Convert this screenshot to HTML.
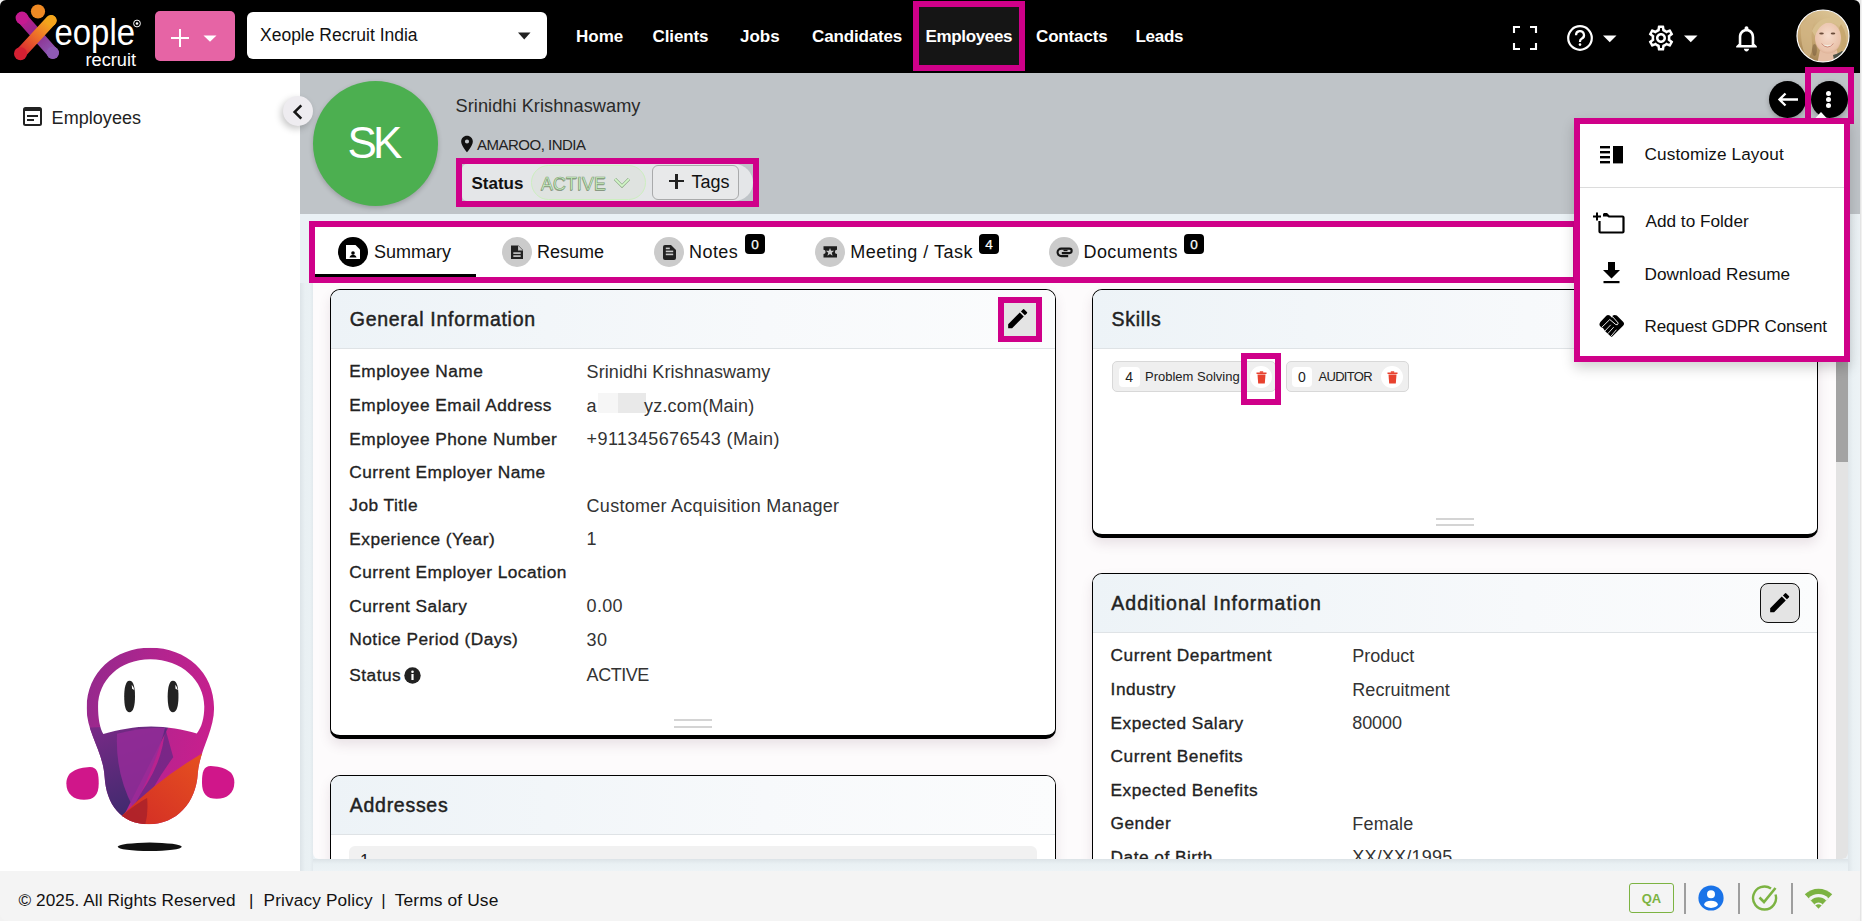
<!DOCTYPE html>
<html><head><meta charset="utf-8">
<style>
*{box-sizing:border-box;margin:0;padding:0}
html,body{width:1862px;height:921px;overflow:hidden;background:#f2f2f2;font-family:"Liberation Sans",sans-serif;color:#222}
.a{position:absolute}
.t{position:absolute;white-space:nowrap;line-height:1}
#hdr{left:0;top:0;width:1860px;height:73px;background:#000;border-radius:6px 6px 0 0}
.nav{position:absolute;top:28px;color:#fff;font-weight:700;font-size:17px;white-space:nowrap;line-height:1}
.mg{position:absolute;border:6px solid #cf0089}
#side{left:0;top:73px;width:300px;height:798px;background:#fff}
#main{left:300px;top:73px;width:1560px;height:798px;background:#eaf1f5}
#prof{left:300px;top:73px;width:1560px;height:141px;background:#bfc4c8}
#panel{left:313px;top:283px;width:1535px;height:576px;background:#fdfbfc;border-radius:0 0 6px 6px;overflow:hidden}
.card{position:absolute;background:#fff;border:1.5px solid #000;border-bottom-width:4px;border-radius:10px;box-shadow:0 6px 12px rgba(100,60,85,.13);overflow:hidden}
.ch{position:absolute;left:0;top:0;right:0;height:59px;background:linear-gradient(90deg,#edf3f7,#f7f9fb 60%,#fbfcfd);border-bottom:1px solid #dfe3e6}
.ct{position:absolute;font-size:19.5px;letter-spacing:.72px;margin-left:.6px;color:#222;white-space:nowrap;line-height:1;-webkit-text-stroke:.45px #222}
.lb{position:absolute;font-size:17.3px;font-weight:400;-webkit-text-stroke:.32px #222;letter-spacing:.48px;margin-top:-.25px;margin-left:.3px;color:#222;white-space:nowrap;line-height:1}
.vl{position:absolute;font-size:18px;color:#333;white-space:nowrap;line-height:1}
#foot{left:0;top:871px;width:1860px;height:50px;background:#f4f4f4;border-radius:0 0 8px 8px}
</style></head><body>

<!-- HEADER -->
<div id="hdr" class="a"></div>
<!-- logo -->
<svg class="a" style="left:0;top:0" width="150" height="72" viewBox="0 0 150 72">
 <defs>
  <linearGradient id="lg1" x1="22" y1="18" x2="53" y2="53" gradientUnits="userSpaceOnUse"><stop offset="0" stop-color="#c51a90"/><stop offset=".45" stop-color="#8d2a8c"/><stop offset="1" stop-color="#8e5ab4"/></linearGradient>
  <linearGradient id="lg2" x1="51" y1="20" x2="20" y2="54" gradientUnits="userSpaceOnUse"><stop offset="0" stop-color="#f6b21a"/><stop offset=".5" stop-color="#ec6a2a"/><stop offset="1" stop-color="#d42032"/></linearGradient>
 </defs>
 <path d="M22 18L53 53" stroke="url(#lg1)" stroke-width="11.5" stroke-linecap="round"/>
 <circle cx="22" cy="18" r="6.4" fill="#c51a90"/>
 <circle cx="52.8" cy="52.8" r="6.2" fill="#8e5ab4"/>
 <path d="M51 20.5L20.5 53.5" stroke="url(#lg2)" stroke-width="11" stroke-linecap="round"/>
 <circle cx="51.5" cy="20.5" r="5.2" fill="#f4a51c"/>
 <circle cx="20.5" cy="53.7" r="6.5" fill="#d42032"/>
 <circle cx="38" cy="11.5" r="7.1" fill="#f08a24"/>
 <text x="54.5" y="45.2" fill="#fff" font-family="Liberation Sans" font-size="37.5" textLength="80.5" lengthAdjust="spacingAndGlyphs">eople</text>
 <text x="85.5" y="65.6" fill="#fff" font-family="Liberation Sans" font-size="18" textLength="50.5" lengthAdjust="spacingAndGlyphs">recruit</text>
 <circle cx="137" cy="23.5" r="3.4" fill="none" stroke="#fff" stroke-width="1"/>
 <circle cx="137" cy="23.5" r="1.3" fill="#fff"/>
</svg>
<!-- pink add btn -->
<div class="a" style="left:155px;top:11px;width:80px;height:50px;background:#e664a5;border-radius:5px"></div>
<div class="a" style="left:171px;top:36.8px;width:18px;height:2.5px;background:#fff"></div>
<div class="a" style="left:178.7px;top:29.2px;width:2.6px;height:17.6px;background:#fff"></div>
<svg class="a" style="left:203px;top:35px" width="14" height="7"><path d="M0.5 0.5H13.5L7 6.8Z" fill="#fff"/></svg>
<!-- tenant dropdown -->
<div class="a" style="left:247px;top:12px;width:300px;height:47px;background:#fff;border-radius:6px"></div>
<div class="t" style="left:260px;top:26.5px;font-size:17.5px;color:#111">Xeople Recruit India</div>
<svg class="a" style="left:518px;top:32px" width="13" height="8"><path d="M0 0.5H12.5L6.25 7.5Z" fill="#222"/></svg>
<!-- nav -->
<div class="mg" style="left:913px;top:1px;width:112px;height:70px;background:#151515"></div>
<div class="nav" style="left:576px">Home</div>
<div class="nav" style="left:652.5px;letter-spacing:-.1px">Clients</div>
<div class="nav" style="left:740px">Jobs</div>
<div class="nav" style="left:812px;letter-spacing:-.15px">Candidates</div>
<div class="nav" style="left:925.5px;letter-spacing:-.35px">Employees</div>
<div class="nav" style="left:1036px;letter-spacing:-.15px">Contacts</div>
<div class="nav" style="left:1135.5px;letter-spacing:-.3px">Leads</div>
<!-- right icons -->
<svg class="a" style="left:1512px;top:25px" width="26" height="26" viewBox="0 0 26 26" fill="none" stroke="#fff" stroke-width="2.1">
 <path d="M2 8V2H8M18 2H24V8M24 18V24H18M8 24H2V18"/>
</svg>
<svg class="a" style="left:1566px;top:24px" width="28" height="28" viewBox="0 0 28 28" fill="none" stroke="#fff" stroke-width="2.2">
 <circle cx="14" cy="14" r="11.8"/>
 <path d="M10 11.2a4 4 0 1 1 5.6 3.6c-1.1.6-1.6 1.2-1.6 2.6v.6" stroke-linecap="butt"/>
 <circle cx="14" cy="20.6" r="1.3" fill="#fff" stroke="none"/>
</svg>
<svg class="a" style="left:1603px;top:35px" width="14" height="8"><path d="M0 0.5H13.5L6.75 7.3Z" fill="#fff"/></svg>
<svg class="a" style="left:1646px;top:23px" width="30" height="30" viewBox="0 0 24 24"><path fill="#fff" d="M19.43 12.98c.04-.32.07-.64.07-.98 0-.34-.03-.66-.07-.98l2.11-1.650c.19-.15.24-.42.12-.64l-2-3.46a.5.5 0 0 0-.44-.25c-.06 0-.12.01-.17.03l-2.49 1c-.52-.4-1.080-.73-1.69-.98l-.38-2.65A.488.488 0 0 0 14 2h-4c-.25 0-.46.18-.49.42l-.38 2.65c-.61.25-1.170.59-1.69.98l-2.49-1a.566.566 0 0 0-.18-.03c-.17 0-.34.09-.43.25l-2 3.46c-.13.22-.07.49.12.64l2.11 1.65c-.04.32-.07.65-.07.98s.03.66.07.98l-2.11 1.65c-.19.15-.24.42-.12.64l2 3.46a.5.5 0 0 0 .44.25c.06 0 .12-.01.17-.03l2.49-1c.52.4 1.08.73 1.69.98l.38 2.65c.03.24.24.42.49.42h4c.25 0 .46-.18.49-.42l.38-2.65c.61-.25 1.17-.59 1.69-.98l2.49 1c.06.02.12.03.18.03.17 0 .34-.09.43-.25l2-3.46c.12-.22.07-.49-.12-.64l-2.11-1.65zm-1.98-1.71c.04.31.05.52.05.73 0 .21-.02.43-.05.73l-.14 1.13.89.7 1.08.84-.7 1.21-1.27-.51-1.04-.42-.9.68c-.43.32-.84.56-1.250.73l-1.06.43-.16 1.13-.2 1.35h-1.4l-.19-1.35-.16-1.13-1.06-.43c-.43-.18-.83-.41-1.23-.71l-.91-.7-1.06.43-1.27.51-.7-1.21 1.08-.84.89-.7-.14-1.13c-.03-.31-.05-.54-.05-.74s.02-.43.05-.73l.14-1.13-.89-.7-1.08-.84.7-1.21 1.27.51 1.04.42.9-.68c.43-.32.84-.56 1.25-.73l1.06-.43.16-1.13.2-1.35h1.39l.19 1.35.16 1.13 1.06.43c.43.18.83.41 1.23.71l.91.7 1.06-.43 1.27-.51.7 1.21-1.07.85-.89.7.14 1.13zM12 8c-2.21 0-4 1.79-4 4s1.79 4 4 4 4-1.79 4-4-1.79-4-4-4zm0 6c-1.1 0-2-.9-2-2s.9-2 2-2 2 .9 2 2-.9 2-2 2z"/></svg>
<svg class="a" style="left:1684px;top:35px" width="14" height="8"><path d="M0 0.5H13.5L6.75 7.3Z" fill="#fff"/></svg>
<svg class="a" style="left:1730.6px;top:22.7px" width="31" height="31" viewBox="0 0 24 24"><path fill="#fff" d="M12 22c1.1 0 2-.9 2-2h-4c0 1.1.89 2 2 2zm6-6v-5c0-3.07-1.64-5.64-4.5-6.32V4c0-.83-.67-1.5-1.5-1.5s-1.5.67-1.5 1.5v.68C7.63 5.36 6 7.92 6 11v5l-2 2v1h16v-1l-2-2zm-2 1H8v-6c0-2.48 1.51-4.5 4-4.5s4 2.02 4 4.5v6z"/></svg>
<!-- avatar photo -->
<svg class="a" style="left:1796px;top:9px" width="54" height="54" viewBox="0 0 54 54">
 <defs>
  <clipPath id="avc"><circle cx="27" cy="27" r="26"/></clipPath>
  <linearGradient id="hairg" x1=".7" y1="0" x2=".2" y2="1"><stop offset="0" stop-color="#dcc597"/><stop offset=".6" stop-color="#c7a772"/><stop offset="1" stop-color="#9c7b4c"/></linearGradient>
  <radialGradient id="faceg" cx=".5" cy=".42" r=".62"><stop offset="0" stop-color="#f6dccd"/><stop offset=".8" stop-color="#eac3ab"/><stop offset="1" stop-color="#d9ab90"/></radialGradient>
 </defs>
 <g clip-path="url(#avc)">
  <rect width="54" height="54" fill="url(#hairg)"/>
  <ellipse cx="18.5" cy="41" rx="2.4" ry="6" fill="#5a4028" opacity=".35"/>
  <path d="M21 56L24 41Q32 47 41 41L43 56Z" fill="#e6bfa6"/>
  <path d="M37 46Q45 44 52 37L56 56L39 56Z" fill="#4b5046"/>
  <ellipse cx="32" cy="29" rx="13" ry="15.5" fill="url(#faceg)"/>
  <path d="M16 22Q23 7 38 9Q47 11 48 22Q42 14 34 13.5Q24 13.5 19 27Z" fill="#d8bf8e"/>
  <path d="M45 15Q53 26 49 44L44.5 41Q47 29 43 19Z" fill="#c8a870"/>
  <path d="M5 16Q12 8 20 10Q14 20 16 34Q17 44 12 50Q4 40 5 16Z" fill="#d2b584" opacity=".8"/>
  <ellipse cx="25.5" cy="24.5" rx="2.3" ry="1" fill="#6a4c3a"/>
  <ellipse cx="37" cy="24.5" rx="2.3" ry="1" fill="#6a4c3a"/>
  <path d="M26 35Q31.5 40.5 37 35Q31.5 37 26 35Z" fill="#f2ede2"/>
  <path d="M25.5 34.6Q31.5 41.5 37.5 34.6" stroke="#c47e6c" stroke-width=".8" fill="none"/>
 </g>
 <circle cx="27" cy="27" r="26" fill="none" stroke="#fff" stroke-width="1.2"/>
</svg>

<!-- SIDEBAR & MAIN -->
<div id="side" class="a"></div>
<div id="main" class="a"></div>
<div id="prof" class="a"></div>
<div id="panel" class="a"></div>

<!-- sidebar content -->
<svg class="a" style="left:23px;top:107px" width="19" height="19" viewBox="0 0 19 19">
 <rect x="1" y="1" width="17" height="17" rx="1.5" fill="none" stroke="#222" stroke-width="2"/>
 <rect x="1" y="1" width="17" height="3" fill="#222"/>
 <rect x="4" y="8" width="11" height="2" fill="#222"/>
 <rect x="4" y="12" width="7" height="2" fill="#222"/>
</svg>
<div class="t" style="left:51.6px;top:109.4px;font-size:18px;color:#222;letter-spacing:.05px">Employees</div>
<div class="a" style="left:283px;top:96px;width:30px;height:30px;border-radius:50%;background:#eeecf0;box-shadow:-2px 3px 7px rgba(0,0,0,.22)"></div>
<svg class="a" style="left:291px;top:103px" width="14" height="18" viewBox="0 0 14 18"><path d="M10.3 2.3L3.6 9l6.7 6.7" fill="none" stroke="#161616" stroke-width="2.5"/></svg>

<!-- profile header -->
<div class="a" style="left:313px;top:81px;width:125px;height:125px;border-radius:50%;background:#4caf50;box-shadow:0 2px 5px rgba(0,0,0,.2)"></div>
<div class="t" style="left:347.5px;top:121px;font-size:44px;color:#fff;letter-spacing:-3.8px">SK</div>
<div class="t" style="left:455.5px;top:97px;font-size:18.2px;color:#2a2a2a;letter-spacing:.05px">Srinidhi Krishnaswamy</div>
<svg class="a" style="left:456.8px;top:133.6px" width="20" height="20" viewBox="0 0 24 24"><path fill="#111" d="M12 2C8.13 2 5 5.13 5 9c0 5.25 7 13 7 13s7-7.75 7-13c0-3.87-3.13-7-7-7zm0 9.5a2.5 2.5 0 1 1 0-5 2.5 2.5 0 0 1 0 5z"/></svg>
<div class="t" style="left:477px;top:137px;font-size:15px;color:#222;letter-spacing:-.5px">AMAROO, INDIA</div>
<!-- status bar -->
<div class="mg" style="left:456px;top:158px;width:303px;height:49px"></div>
<div class="a" style="left:462px;top:164px;width:291px;height:37px;background:#e4e6e8;border-radius:6px 22px 22px 6px;overflow:hidden"></div>
<div class="t" style="left:471.5px;top:175px;font-size:17px;font-weight:700;color:#111">Status</div>
<div class="a" style="left:531px;top:165px;width:115px;height:35px;border:1px solid #cdeec0;border-radius:18px;background:#dfe3e0"></div>
<div class="t" style="left:541px;top:174.5px;font-size:18px;color:#d2f6c8;-webkit-text-stroke:.6px #7d9a74;text-shadow:-.5px .5px 0 rgba(60,80,55,.5)">ACTIVE</div>
<svg class="a" style="left:613px;top:177px" width="18" height="11" viewBox="0 0 18 11"><path d="M2 2l7 7 7-7" fill="none" stroke="#7d9a74" stroke-width="3"/><path d="M2 2l7 7 7-7" fill="none" stroke="#d2f6c8" stroke-width="1.8"/></svg>
<div class="a" style="left:652px;top:164.5px;width:87px;height:35px;border:1px solid #a9aaab;border-radius:6px;background:#e8e9ea"></div>
<div class="a" style="left:669px;top:180px;width:15px;height:2.2px;background:#222"></div>
<div class="a" style="left:675.4px;top:173.6px;width:2.2px;height:15px;background:#222"></div>
<div class="t" style="left:691.5px;top:173px;font-size:18px;color:#111">Tags</div>

<!-- back & kebab -->
<div class="a" style="left:1769px;top:81px;width:37px;height:37px;border-radius:50%;background:#000;box-shadow:0 2px 5px rgba(0,0,0,.25)"></div>
<svg class="a" style="left:1777px;top:92px" width="22" height="15" viewBox="0 0 22 15"><path d="M21 7.5H3M8.5 1.5L2.5 7.5l6 6" fill="none" stroke="#fff" stroke-width="2.3"/></svg>
<div class="a" style="left:1811px;top:81px;width:37px;height:37px;border-radius:50%;background:#000;box-shadow:0 2px 5px rgba(0,0,0,.25)"></div>
<div class="a" style="left:1826.4px;top:90.8px;width:5px;height:5px;border-radius:50%;background:#fff"></div>
<div class="a" style="left:1826.4px;top:97px;width:5px;height:5px;border-radius:50%;background:#fff"></div>
<div class="a" style="left:1826.4px;top:103.2px;width:5px;height:5px;border-radius:50%;background:#fff"></div>
<svg class="a" style="left:1814px;top:112px" width="14" height="7"><path d="M7 0L13 6.5H1Z" fill="#fff"/></svg>
<div class="mg" style="left:1805px;top:67px;width:49px;height:57px"></div>

<!-- tabs -->
<div class="a" style="left:309px;top:221px;width:1270px;height:62px;background:#fff;border:6px solid #cf0089"></div>
<div class="a" style="left:315px;top:274px;width:161px;height:3px;background:#000"></div>
<div class="a" style="left:338px;top:237px;width:30px;height:30px;border-radius:50%;background:#000"></div>
<svg class="a" style="left:345px;top:244px" width="16" height="16" viewBox="0 0 16 16"><path d="M1 1h9.5L15 5.5V15H1z" fill="#fff"/><circle cx="8" cy="9" r="1.8" fill="#000"/><path d="M4.5 13.6c.4-2 1.8-2.8 3.5-2.8s3.1.8 3.5 2.8z" fill="#000"/></svg>
<div class="t" style="left:374px;top:243px;font-size:18px;color:#111">Summary</div>
<div class="a" style="left:502px;top:237px;width:30px;height:30px;border-radius:50%;background:#cbcbcb"></div>
<svg class="a" style="left:510px;top:244px" width="14" height="16" viewBox="0 0 14 16"><path d="M1 1.5h7.5L13 6v9H1z" fill="#222"/><path d="M8 1.5V6.5h5" fill="#cbcbcb"/><path d="M8.5 1.6V6h4.4" fill="none" stroke="#222" stroke-width=".1"/><rect x="3.3" y="8.3" width="7.4" height="1.6" fill="#cbcbcb"/><rect x="3.3" y="11.3" width="7.4" height="1.6" fill="#cbcbcb"/></svg>
<div class="t" style="left:537px;top:243px;font-size:18px;color:#111">Resume</div>
<div class="a" style="left:654px;top:237px;width:30px;height:30px;border-radius:50%;background:#cbcbcb"></div>
<svg class="a" style="left:662px;top:244px" width="15" height="16" viewBox="0 0 15 16"><path d="M1 3a2 2 0 0 1 2-2h6l5 5v8a2 2 0 0 1-2 2H3a2 2 0 0 1-2-2z" fill="#222"/><rect x="3.8" y="6.6" width="7.4" height="1.6" fill="#cbcbcb"/><rect x="3.8" y="9.6" width="7.4" height="1.6" fill="#cbcbcb"/><rect x="3.8" y="3.6" width="4" height="1.6" fill="#cbcbcb"/></svg>
<div class="t" style="left:689px;top:243px;font-size:18px;color:#111;letter-spacing:.45px">Notes</div>
<div class="a" style="left:745px;top:234px;width:20px;height:19.5px;border-radius:4px;background:#000"></div>
<div class="t" style="left:745px;top:238px;width:20px;text-align:center;font-size:13.5px;font-weight:400;-webkit-text-stroke:.25px #fff;color:#fff">0</div>
<div class="a" style="left:815px;top:237px;width:30px;height:30px;border-radius:50%;background:#cbcbcb"></div>
<svg class="a" style="left:821px;top:244px" width="18" height="16" viewBox="0 0 18 16"><path d="M2.5 2.2h13.5v3.6a2.1 2.1 0 0 0 0 4.2v3.6H2.5V10a2.1 2.1 0 0 0 0-4.2z" fill="#1e1e1e"/><path d="M9.00 3.90L10.12 6.66L13.09 6.87L10.81 8.79L11.53 11.68L9.00 10.10L6.47 11.68L7.19 8.79L4.91 6.87L7.88 6.66Z" fill="#cbcbcb"/></svg>
<div class="t" style="left:850.3px;top:243px;font-size:18px;color:#111;letter-spacing:.5px">Meeting / Task</div>
<div class="a" style="left:979px;top:234px;width:20px;height:19.5px;border-radius:4px;background:#000"></div>
<div class="t" style="left:979px;top:238px;width:20px;text-align:center;font-size:13.5px;font-weight:400;-webkit-text-stroke:.25px #fff;color:#fff">4</div>
<div class="a" style="left:1049px;top:237px;width:30px;height:30px;border-radius:50%;background:#cbcbcb"></div>
<svg class="a" style="left:1055px;top:245px" width="18" height="14" viewBox="0 0 18 14"><path d="M13.2 11.1H6.3A3.75 3.75 0 0 1 6.3 3.6H14.4A2.25 2.25 0 0 1 14.4 8.1H6.8" fill="none" stroke="#151515" stroke-width="2.1"/><path d="M8.5 5.5H12.5" stroke="#151515" stroke-width="1.4"/></svg>
<div class="t" style="left:1083.6px;top:243px;font-size:18px;color:#111;letter-spacing:.35px">Documents</div>
<div class="a" style="left:1184px;top:234px;width:20px;height:19.5px;border-radius:4px;background:#000"></div>
<div class="t" style="left:1184px;top:238px;width:20px;text-align:center;font-size:13.5px;font-weight:400;-webkit-text-stroke:.25px #fff;color:#fff">0</div>

<!-- General Information card -->
<div class="card" style="left:330px;top:289px;width:726px;height:450px">
 <div class="ch"></div>
</div>
<div class="ct" style="left:349.2px;top:309.5px">General Information</div>
<div class="a" style="left:998px;top:297px;width:44px;height:45px;background:#e4e4e4;border:6px solid #cf0089"></div>
<svg class="a" style="left:1004.8px;top:305.8px" width="25.3" height="25.3" viewBox="0 0 24 24"><path fill="#000" d="M3 17.25V21h3.75L17.81 9.94l-3.75-3.75L3 17.25zM20.71 7.04a1 1 0 0 0 0-1.41l-2.34-2.34a1 1 0 0 0-1.41 0l-1.83 1.83 3.75 3.75 1.83-1.83z"/></svg>
<div class="lb" style="left:349px;top:363.71px">Employee Name</div>
<div class="vl" style="left:586.6px;top:362.86px;letter-spacing:.08px">Srinidhi Krishnaswamy</div>
<div class="lb" style="left:349px;top:397.41px">Employee Email Address</div>
<div class="vl" style="left:586.6px;top:396.56px">a</div>
<div class="a" style="left:598px;top:393px;width:20px;height:20px;background:#f6f6f6"></div>
<div class="a" style="left:618px;top:393px;width:28px;height:20px;background:#e9e9e9"></div>
<div class="vl" style="left:644px;top:396.56px;letter-spacing:.2px">yz.com(Main)</div>
<div class="lb" style="left:349px;top:430.81px">Employee Phone Number</div>
<div class="vl" style="left:586.6px;top:429.96px;letter-spacing:.4px">+911345676543 (Main)</div>
<div class="lb" style="left:349px;top:464.41px">Current Employer Name</div>
<div class="lb" style="left:349px;top:497.71px">Job Title</div>
<div class="vl" style="left:586.6px;top:496.86px;letter-spacing:.27px">Customer Acquisition Manager</div>
<div class="lb" style="left:349px;top:531.31px">Experience (Year)</div>
<div class="vl" style="left:586.6px;top:530.46px">1</div>
<div class="lb" style="left:349px;top:564.41px">Current Employer Location</div>
<div class="lb" style="left:349px;top:597.81px">Current Salary</div>
<div class="vl" style="left:586.6px;top:596.96px;letter-spacing:.3px">0.00</div>
<div class="lb" style="left:349px;top:631.51px">Notice Period (Days)</div>
<div class="vl" style="left:586.6px;top:630.66px;letter-spacing:.3px">30</div>
<div class="lb" style="left:349px;top:666.91px">Status</div>
<svg class="a" style="left:404px;top:667px" width="17" height="17" viewBox="0 0 17 17"><circle cx="8.5" cy="8.5" r="8.2" fill="#222"/><rect x="7.4" y="7" width="2.2" height="6" fill="#fff"/><circle cx="8.5" cy="4.7" r="1.3" fill="#fff"/></svg>
<div class="vl" style="left:586.6px;top:665.66px;letter-spacing:-.45px">ACTIVE</div>
<div class="a" style="left:674px;top:719px;width:38px;height:2px;background:#d4d4d4"></div>
<div class="a" style="left:674px;top:726px;width:38px;height:2px;background:#d4d4d4"></div>

<!-- Addresses card -->
<div class="card" style="left:330px;top:775px;width:726px;height:200px">
 <div class="ch"></div>
 <div class="a" style="left:18px;top:70px;width:688px;height:60px;background:#f1f1f1;border-radius:6px"></div>
</div>
<div class="ct" style="left:349.2px;top:795.5px">Addresses</div>
<div class="t" style="left:360px;top:852px;font-size:17px;color:#222">1</div>

<!-- Skills card -->
<div class="card" style="left:1092px;top:289px;width:726px;height:249px">
 <div class="ch"></div>
</div>
<div class="ct" style="left:1111px;top:309.5px">Skills</div>
<div class="a" style="left:1112px;top:360.5px;width:164px;height:31.5px;background:#efefef;border:1px solid #d8d8d8;border-radius:5px"></div>
<div class="a" style="left:1119px;top:366.5px;width:20.5px;height:20.5px;background:#fff;border-radius:4px"></div>
<div class="t" style="left:1119px;top:370px;width:20.5px;text-align:center;font-size:14px;color:#222">4</div>
<div class="t" style="left:1145px;top:370px;font-size:13px;color:#222">Problem Solving</div>
<div class="a" style="left:1250px;top:366px;width:22px;height:22px;border-radius:50%;background:#fff"></div>
<svg class="a" style="left:1255.5px;top:370.5px" width="11" height="13" viewBox="0 0 11 13"><path d="M1.5 3.5h8l-.7 9H2.2z" fill="#e8412e"/><rect x=".5" y="1.5" width="10" height="1.5" fill="#e8412e"/><rect x="3.8" y=".3" width="3.4" height="1.5" fill="#e8412e"/></svg>
<div class="mg" style="left:1241px;top:353px;width:40px;height:52px"></div>
<div class="a" style="left:1286px;top:360.5px;width:123px;height:31.5px;background:#efefef;border:1px solid #d8d8d8;border-radius:5px"></div>
<div class="a" style="left:1292px;top:366.5px;width:20px;height:20.5px;background:#fff;border-radius:4px"></div>
<div class="t" style="left:1292px;top:370px;width:20px;text-align:center;font-size:14px;color:#222">0</div>
<div class="t" style="left:1318.5px;top:370px;font-size:13px;color:#222;letter-spacing:-.7px">AUDITOR</div>
<div class="a" style="left:1381px;top:366px;width:22px;height:22px;border-radius:50%;background:#fff"></div>
<svg class="a" style="left:1386.5px;top:370.5px" width="11" height="13" viewBox="0 0 11 13"><path d="M1.5 3.5h8l-.7 9H2.2z" fill="#e8412e"/><rect x=".5" y="1.5" width="10" height="1.5" fill="#e8412e"/><rect x="3.8" y=".3" width="3.4" height="1.5" fill="#e8412e"/></svg>
<div class="a" style="left:1436px;top:518px;width:38px;height:2px;background:#d4d4d4"></div>
<div class="a" style="left:1436px;top:524px;width:38px;height:2px;background:#d4d4d4"></div>

<!-- Additional Information card -->
<div class="card" style="left:1092px;top:573px;width:726px;height:400px">
 <div class="ch"></div>
</div>
<div class="ct" style="left:1110.7px;top:593.5px;letter-spacing:1px">Additional Information</div>
<div class="a" style="left:1760px;top:583px;width:40px;height:40px;background:#e4e4e4;border:1.5px solid #111;border-radius:8px"></div>
<svg class="a" style="left:1767px;top:590px" width="25.3" height="25.3" viewBox="0 0 24 24"><path fill="#000" d="M3 17.25V21h3.75L17.81 9.94l-3.75-3.75L3 17.25zM20.71 7.04a1 1 0 0 0 0-1.41l-2.34-2.34a1 1 0 0 0-1.41 0l-1.83 1.83 3.75 3.75 1.83-1.83z"/></svg>
<div class="lb" style="left:1110.3px;top:647.61px">Current Department</div>
<div class="vl" style="left:1352.3px;top:646.76px">Product</div>
<div class="lb" style="left:1110.3px;top:681.71px">Industry</div>
<div class="vl" style="left:1352.3px;top:680.86px;letter-spacing:.05px">Recruitment</div>
<div class="lb" style="left:1110.3px;top:715.01px">Expected Salary</div>
<div class="vl" style="left:1352.3px;top:714.16px;letter-spacing:-.1px">80000</div>
<div class="lb" style="left:1110.3px;top:748.51px">Current Benefits</div>
<div class="lb" style="left:1110.3px;top:781.81px">Expected Benefits</div>
<div class="lb" style="left:1110.3px;top:815.71px">Gender</div>
<div class="vl" style="left:1352.3px;top:814.86px;letter-spacing:.2px">Female</div>
<div class="lb" style="left:1110.3px;top:849.11px">Date of Birth</div>
<div class="vl" style="left:1352.3px;top:848.26px;letter-spacing:.2px">XX/XX/1995</div>

<!-- bottom clip band (main bg below panel) -->
<div class="a" style="left:300px;top:859px;width:1560px;height:12px;background:linear-gradient(#dce3e7,#e9f0f3 5px,#edf3f6)"></div>
<div class="a" style="left:300px;top:283px;width:13px;height:588px;background:linear-gradient(90deg,#dde4e8,#e9f0f3 5px,#eaf1f4 10px,#e2e9ed 13px)"></div>

<!-- scrollbar -->
<div class="a" style="left:1836px;top:214px;width:12px;height:645px;background:#e3e3e3;border-radius:0 0 6px 0"></div>
<div class="a" style="left:1836px;top:300px;width:12px;height:162px;background:#a3a3a3"></div>
<div class="a" style="left:1848px;top:214px;width:12px;height:657px;background:linear-gradient(90deg,#dfe6ea,#eaf1f4 5px,#edf3f6)"></div>

<!-- dropdown menu -->
<div class="a" style="left:1574px;top:118px;width:276px;height:244px;background:#fff;border:6px solid #cf0089;box-shadow:0 6px 12px rgba(0,0,0,.18)"></div>
<svg class="a" style="left:1600px;top:146px" width="24" height="18" viewBox="0 0 24 18"><rect x="0" y="0" width="10" height="2.4" fill="#000"/><rect x="0" y="5" width="10" height="2.4" fill="#000"/><rect x="0" y="10" width="10" height="2.4" fill="#000"/><rect x="0" y="15" width="10" height="2.4" fill="#000"/><rect x="13" y="0" width="10" height="17.4" fill="#000"/></svg>
<div class="t" style="left:1644.6px;top:146.3px;font-size:17.2px;color:#111;letter-spacing:.1px">Customize Layout</div>
<div class="a" style="left:1580px;top:187px;width:264px;height:1px;background:#dcdcdc"></div>
<svg class="a" style="left:1592px;top:211px" width="33" height="23" viewBox="0 0 33 23"><path d="M1 5.5h8M5 1.5v8" stroke="#000" stroke-width="2"/><path d="M7.5 10v10.5a1 1 0 0 0 1 1h22a1 1 0 0 0 1-1V6.5a1 1 0 0 0-1-1H17l-2.5-2.5H12" fill="none" stroke="#000" stroke-width="2.2"/><path d="M11 2.5h4l2.5 3H11z" fill="#000"/></svg>
<div class="t" style="left:1645.5px;top:213px;font-size:17.2px;color:#111">Add to Folder</div>
<svg class="a" style="left:1602px;top:261px" width="19" height="23" viewBox="0 0 19 23"><path d="M6 1h7v8h5l-8.5 8.5L1 9h5z" fill="#000"/><rect x="1.5" y="20" width="16" height="2.2" fill="#000"/></svg>
<div class="t" style="left:1644.5px;top:265.8px;font-size:17.2px;color:#111;letter-spacing:.03px">Download Resume</div>
<svg class="a" style="left:1592px;top:308px" width="40" height="36" viewBox="0 0 1023 921"><path d="M215 475 Q165 420 215 355 L365 200 Q405 165 455 195 L520 255 L530 195 Q580 160 635 195 L795 350 Q845 400 795 455 L525 725 Q495 755 470 725 L455 705 Q425 680 400 650 Q370 630 345 600 Q305 560 285 520 Q250 500 215 475Z" fill="#000"/><path d="M255 490 L455 295 L610 425 Q665 445 670 385 L525 220" fill="none" stroke="#fff" stroke-width="24" stroke-linejoin="round"/><path d="M320 600 L480 430 M400 660 L555 490 M470 740 L625 555" stroke="#fff" stroke-width="22"/></svg>
<div class="t" style="left:1644.6px;top:317.6px;font-size:17px;color:#111;letter-spacing:-.15px">Request GDPR Consent</div>

<div class="a" style="left:1860px;top:0;width:1px;height:921px;background:#e4e4e4"></div>
<!-- FOOTER -->
<div id="foot" class="a"></div>
<div class="t" style="left:18.5px;top:891.6px;font-size:17.2px;color:#111;letter-spacing:.07px">© 2025. All Rights Reserved</div>
<div class="t" style="left:249px;top:892px;font-size:17px;color:#111">|</div>
<div class="t" style="left:263.6px;top:891.6px;font-size:17.2px;color:#111;letter-spacing:.15px">Privacy Policy</div>
<div class="t" style="left:381.3px;top:892px;font-size:17px;color:#111">|</div>
<div class="t" style="left:394.8px;top:891.6px;font-size:17.4px;color:#111;letter-spacing:.1px">Terms of Use</div>
<div class="a" style="left:1629px;top:883px;width:45px;height:30px;border:1.6px solid #7cb342;border-radius:3px"></div>
<div class="t" style="left:1629px;top:892px;width:45px;text-align:center;font-size:13px;font-weight:700;color:#7cb342">QA</div>
<div class="a" style="left:1684px;top:883px;width:2px;height:31px;background:#9e9e9e"></div>
<svg class="a" style="left:1698px;top:885px" width="26" height="26" viewBox="0 0 26 26"><circle cx="13" cy="13" r="12.6" fill="#1a73e8"/><circle cx="13" cy="9.2" r="4" fill="#fff"/><ellipse cx="13" cy="19.3" rx="6.8" ry="3.6" fill="#fff"/></svg>
<div class="a" style="left:1738px;top:883px;width:2px;height:31px;background:#9e9e9e"></div>
<svg class="a" style="left:1751px;top:884px" width="28" height="28" viewBox="0 0 28 28"><path d="M24.5 10.5A11.5 11.5 0 1 1 20 4.5" fill="none" stroke="#7cb342" stroke-width="2.4"/><path d="M8.5 13.5l4.5 4.5L24.5 4" fill="none" stroke="#7cb342" stroke-width="2.6"/></svg>
<div class="a" style="left:1791px;top:883px;width:2px;height:31px;background:#9e9e9e"></div>
<svg class="a" style="left:1804px;top:888px" width="29" height="21" viewBox="0 0 29 21"><path d="M14.5 20.5L0.8 6.2A20 20 0 0 1 28.2 6.2z" fill="#7cb342"/><path d="M14.5 20.5L4.6 10.2A14 14 0 0 1 24.4 10.2z" fill="#f4f4f4"/><path d="M14.5 20.5L6.9 12.6A10.5 10.5 0 0 1 22.1 12.6z" fill="#7cb342"/><path d="M14.5 20.5L10.4 16.3A5.6 5.6 0 0 1 18.6 16.3z" fill="#f4f4f4"/><path d="M14.5 20.5L11.6 17.5A4 4 0 0 1 17.4 17.5z" fill="#7cb342"/></svg>

<!-- mascot -->
<svg class="a" style="left:0;top:620px" width="320" height="301" viewBox="0 0 979 921">
 <defs>
  <clipPath id="bodyc"><path d="M460 85C570 85 655 160 655 270C655 340 610 400 605 470C600 560 540 625 455 625C370 625 325 565 320 480C315 400 265 345 265 270C265 160 350 85 460 85Z"/></clipPath>
  <linearGradient id="mb" x1="0" y1="0" x2="1" y2=".3"><stop offset="0" stop-color="#8f2a8c"/><stop offset=".55" stop-color="#b3248f"/><stop offset="1" stop-color="#c81f8d"/></linearGradient>
  <linearGradient id="mp" x1="0" y1="0" x2=".3" y2="1"><stop offset="0" stop-color="#7c2a88"/><stop offset="1" stop-color="#3b2a6c"/></linearGradient>
  <linearGradient id="mo" x1="1" y1="0" x2="0" y2="1"><stop offset="0" stop-color="#e8561f"/><stop offset="1" stop-color="#cc1f28"/></linearGradient>
 </defs>
 <g clip-path="url(#bodyc)">
  <rect x="250" y="80" width="420" height="560" fill="url(#mb)"/>
  <path d="M250 330L520 318L372 612L250 640Z" fill="url(#mp)"/>
  <path d="M358 348Q440 326 505 330Q478 440 408 575Q352 470 358 348Z" fill="#952c99" opacity=".85"/>
  <path d="M505 330Q500 420 450 500Q420 545 395 600L420 610Q470 500 530 420Z" fill="#4e2a82" opacity=".6"/>
  <path d="M660 385L660 700L300 700L372 600Q500 470 660 385Z" fill="url(#mo)"/>
  <path d="M372 600Q420 560 450 545Q455 600 440 640L330 640Z" fill="#a8202b" opacity=".8"/>
 </g>
 <path d="M460 120C555 120 625 185 625 265C625 300 617 330 602 347C560 336 512 326 462 326C412 326 362 336 316 349C305 330 300 300 300 265C300 185 365 120 460 120Z" fill="#fff"/>
 <path d="M396 186C410 186 413 210 413 234C413 262 408 282 396 282C384 282 380 262 380 234C380 210 384 186 396 186Z" fill="#222"/>
 <path d="M529 186C543 186 546 210 546 234C546 262 541 282 529 282C517 282 513 262 513 234C513 210 517 186 529 186Z" fill="#222"/>
 <path d="M403 198Q410 205 411 214L404 210Z" fill="#fff"/>
 <path d="M536 198Q543 205 544 214L537 210Z" fill="#fff"/>
 <path d="M203 500C203 465 235 452 275 450C298 450 302 470 302 500C302 535 287 550 257 550C225 550 203 532 203 500Z" fill="#d0168a"/>
 <path d="M717 497C717 462 685 449 645 447C622 447 618 467 618 497C618 532 633 547 663 547C695 547 717 529 717 497Z" fill="#d0168a"/>
 <ellipse cx="458" cy="694" rx="98" ry="13" fill="#111"/>
</svg>

</body></html>
